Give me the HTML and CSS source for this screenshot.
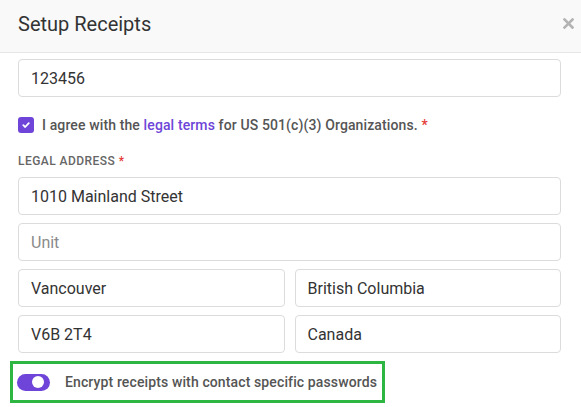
FILE: index.html
```html
<!DOCTYPE html>
<html>
<head>
<meta charset="utf-8">
<link rel="stylesheet" href="styles.css">
</head>
<body>
<div class="modal">
  <div class="modal-header">
    <h1 class="title">Setup Receipts</h1>
    <button class="close" aria-label="Close">
      <svg width="11" height="11" viewBox="0 0 11 11"><path d="M1.5 1.5 L9.5 9.5 M9.5 1.5 L1.5 9.5" stroke="#b3b3b3" stroke-width="2.6" stroke-linecap="square"/></svg>
    </button>
  </div>
  <div class="modal-body">
    <div class="field">123456</div>
    <div class="agree">
      <span class="checkbox">
        <svg width="10" height="10" viewBox="0 0 10 10"><path d="M2.3 5.2 L4.2 7 L7.8 3.2" fill="none" stroke="#fff" stroke-width="1.8" stroke-linecap="round" stroke-linejoin="round"/></svg>
      </span>
      <span class="agree-text">I agree with the <a class="link">legal terms</a> for US 501(c)(3) Organizations. <span class="req">*</span></span>
    </div>
    <div class="label">LEGAL ADDRESS <span class="req">*</span></div>
    <div class="field">1010 Mainland Street</div>
    <div class="field placeholder">Unit</div>
    <div class="row">
      <div class="field">Vancouver</div>
      <div class="field">British Columbia</div>
    </div>
    <div class="row">
      <div class="field">V6B 2T4</div>
      <div class="field">Canada</div>
    </div>
    <div class="highlight">
      <span class="toggle"><span class="knob"></span></span>
      <span class="toggle-text">Encrypt receipts with contact specific passwords</span>
    </div>
  </div>
</div>
</body>
</html>
```
FILE: styles.css
```css
* { box-sizing: border-box; }
html, body { margin: 0; padding: 0; background: #fff; }
body { font-family: Roboto, "Liberation Sans", sans-serif; color: #333; }
.modal { width: 581px; height: 407px; overflow: hidden; }
.modal-header {
  height: 53px;
  background: #f9f9f9;
  border-bottom: 1px solid #e6e6e6;
  display: flex;
  align-items: center;
  justify-content: space-between;
  padding: 0 7px 0 18px;
}
.title { margin: 0; font-size: 20px; font-weight: 400; color: #333; line-height: 24px; padding-bottom: 4px; }
.close { border: 0; background: none; padding: 0; width: 11px; height: 11px; display: flex; margin-bottom: 6px; }
.modal-body { padding: 6px 20px 0 18px; }
.field {
  height: 38px;
  border: 1px solid #dcdcdc;
  border-radius: 4px;
  padding: 0 12px;
  display: flex;
  align-items: center;
  font-size: 16px;
  color: #333;
  margin-bottom: 8px;
}
.field.placeholder { color: #8a8a8a; }
.row { display: flex; gap: 10px; }
.row .field { flex: 1; }
.agree { display: flex; align-items: center; gap: 8px; height: 20px; margin-top: 18px; }
.checkbox {
  width: 16px; height: 16px; border-radius: 3px; background: #6e45d8;
  display: flex; align-items: center; justify-content: center;
}
.agree-text { font-size: 14px; font-weight: 500; color: #555; letter-spacing: 0.12px; }
.link { color: #6e45d8; }
.req { color: #e53935; }
.label {
  margin-top: 18px; margin-bottom: 8px;
  font-size: 12px; line-height: 16px; font-weight: 500; color: #666; letter-spacing: 0.45px;
}
.highlight {
  margin-left: -8px;
  width: 375px;
  height: 42px;
  border: 3px solid #2db742;
  display: flex;
  align-items: center;
  padding-left: 4px;
  gap: 15px;
}
.toggle {
  width: 33px; height: 17px; border-radius: 9px; background: #6e45d8;
  display: flex; align-items: center; justify-content: flex-end; padding-right: 6px;
}
.knob { width: 12px; height: 12px; border-radius: 50%; background: #fff; }
.toggle-text { font-size: 14px; font-weight: 500; color: #555; letter-spacing: 0.12px; }
```
